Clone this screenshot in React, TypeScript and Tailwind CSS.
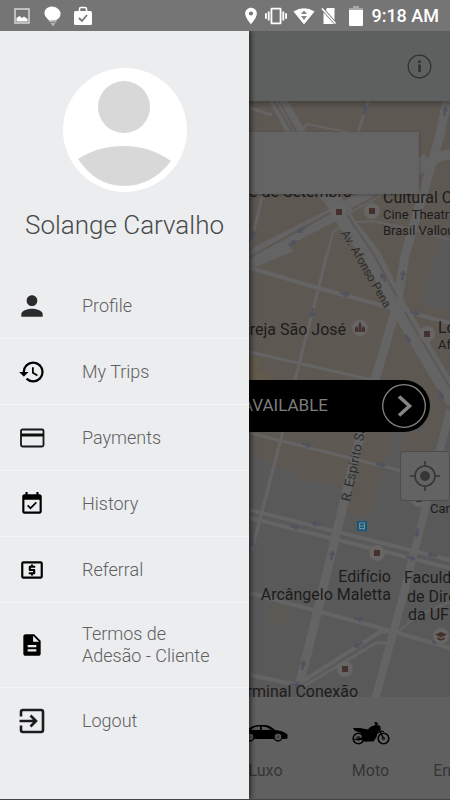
import type { ReactNode } from "react";
import {
  MdDescription,
  MdEventAvailable,
  MdHistory,
  MdLocalAtm,
  MdLocationOn,
  MdPerson,
  MdVibration,
} from "react-icons/md";

type MenuItem = { label: string; icon: ReactNode };

const menu: MenuItem[] = [
  { label: "Profile", icon: <MdPerson className="size-8 text-[#2b2b2b]" /> },
  { label: "My Trips", icon: <MdHistory className="size-7" /> },
  { label: "Payments", icon: <CardIcon /> },
  { label: "History", icon: <MdEventAvailable className="size-[26px]" /> },
  { label: "Referral", icon: <MdLocalAtm className="size-[26px]" /> },
  { label: "Termos de Adesão - Cliente", icon: <MdDescription className="size-[26px]" /> },
  { label: "Logout", icon: <ExitIcon /> },
];

const categories: MenuItem[] = [
  { label: "Luxo", icon: <CarIcon /> },
  { label: "Moto", icon: <MotorcycleIcon /> },
  { label: "Encomenda", icon: null },
];

function CardIcon() {
  return (
    <svg viewBox="0 0 26 20" className="h-5 w-[26px]" aria-hidden="true">
      <rect x="2" y="1.5" width="22.5" height="17" rx="1.5" fill="none" stroke="#161616" strokeWidth="1.8" />
      <path d="M2 7h22.5" stroke="#0a0f0a" strokeWidth="3" />
    </svg>
  );
}

function ExitIcon() {
  return (
    <svg viewBox="0 0 26 26" className="size-[26px]" fill="none" stroke="#1c1c1c" strokeWidth="2.6" aria-hidden="true">
      <path d="M2 8.500V4q0-2 2-2h18q2 0 2 2v18q0 2-2 2H4q-2 0-2-2v-4.500" />
      <path d="M.5 13h15M11.500 7.500 17 13l-5.500 5.500" />
    </svg>
  );
}

function CarIcon() {
  return (
    <svg viewBox="0 0 46 18" className="h-[18px] w-[46px]" aria-hidden="true">
      <path d="M1 8C5 5 9 1 15 1h6c5 0 8 2 11 5 5 .5 9 1.500 11 3.500l1.500 1v4L42 15H2L0 13z" />
      <path d="M8 6c3-3 5-3.500 9-3.500V6zM18.500 2.500c4 0 7 1 9.500 3.500h-9z" fill="#5a5a5a" />
      <circle cx="7" cy="13" r="4" fill="#606060" stroke="#000" strokeWidth="1.5" />
      <circle cx="35" cy="13" r="4" fill="#606060" stroke="#000" strokeWidth="1.5" />
      <path d="M7 9.500v7M3.500 13h7M35 9.500v7M31.500 13h7M32.500 10.500l5 5M37.500 10.500l-5 5" stroke="#333" strokeWidth=".6" />
    </svg>
  );
}

function MotorcycleIcon() {
  return (
    <svg viewBox="0 0 38 24" className="h-6 w-[38px]" aria-hidden="true">
      <g fill="none" stroke="#000">
        <circle cx="6.5" cy="17.5" r="5.3" strokeWidth="1.6" />
        <circle cx="31.5" cy="17.5" r="5.3" strokeWidth="1.6" />
        <circle cx="6.5" cy="17.5" r="1.8" />
        <circle cx="31.5" cy="17.5" r="1.2" />
        <path d="m25 5 6.500 12.500M6.500 17.500 15 20M24 5V1M22.500 1.500 26 3" strokeWidth="1.5" />
        <path d="M24 14q3-5 8-3.500" strokeWidth="1.3" />
      </g>
      <path d="M1 7h7l8 1.500c2-3 5-4 8-4.500l4 .5 1 4-3 1.500-1.500 6-3 4.500H12l-1-2-9 .500 1-1 7-1.500-1.500-5L3 10z" />
    </svg>
  );
}

function NoSimIcon() {
  return (
    <svg viewBox="0 0 16 18" className="h-[18px] w-4" aria-hidden="true">
      <path d="M6 1h7.500v12L4.800 3.200zM2.500 5.500 13 17H2.500z" fill="#fff" />
      <path d="m1 1.500 13.500 15" stroke="#fff" strokeWidth="1.6" />
    </svg>
  );
}

function StatusBar() {
  return (
    <div className="flex h-[31px] items-center justify-between bg-[#757575] pr-[11px] pl-[14px] text-white">
      <div className="flex items-center">
        <svg viewBox="0 0 16 16" className="mr-[13px] size-4" aria-hidden="true">
          <rect x="1" y="1" width="14" height="14" fill="none" stroke="#ddd" strokeWidth="1.4" />
          <path d="M2.500 13.500v-3.500l3-2 2.500 2 2-1.500 3.500 2.500v2.500z" fill="#fff" />
        </svg>
        <svg viewBox="0 0 20 22" className="mr-2.5 h-[22px] w-5" aria-hidden="true">
          <path d="M8 1.500C12 1 17 4 17.500 8c.3 4-2 6-5 7.500l-6 .5C4 13.500 1 11 1.500 7 2 4 4.500 2 8 1.500Z" fill="#fff" />
          <path d="M6 16q4-2 8 0l-4 5.500z" fill="#b5b5b5" />
          <path d="M7 17.500h6" stroke="#757575" strokeWidth=".8" />
        </svg>
        <svg viewBox="0 0 20 20" className="size-5" aria-hidden="true">
          <path d="M6.500 5V3q0-1.500 1.500-1.500h4q1.500 0 1.500 1.500v2" fill="none" stroke="#fff" strokeWidth="1.6" />
          <rect x="1" y="5" width="18" height="14" rx="1.5" fill="#fff" />
          <path d="m6 12 3 3 5-6" fill="none" stroke="#757575" strokeWidth="1.8" />
        </svg>
      </div>
      <div className="flex items-center">
        <MdLocationOn className="mr-1 size-5" aria-hidden="true" />
        <MdVibration className="mr-1.5 size-[22px]" aria-hidden="true" />
        <svg viewBox="0 0 22 18" className="mr-1.5 h-[18px] w-[22px]" aria-hidden="true">
          <path d="M.5 4.500Q11-2 21.500 4.500L11 17.500z" fill="#fff" />
          <path d="m11 3.500 3 3.500H8zM8 9h6l-3 4z" fill="#858585" />
        </svg>
        <NoSimIcon />
        <svg viewBox="0 0 14 20" className="mr-2 ml-3 h-5 w-3.5" aria-hidden="true">
          <path d="M4 0h6v2h3q1 0 1 1v2H0V3q0-1 1-1h3z" fill="#a8a8a8" />
          <path d="M0 4h14v15q0 1-1 1H1q-1 0-1-1z" fill="#fff" />
        </svg>
        <span className="text-lg leading-6 font-medium">9:18 AM</span>
      </div>
    </div>
  );
}

// [points, stroke width]
const streets: [string, number][] = [
  ["250,108 272,115", 3],
  ["300,132 307,124 357,134", 2],
  ["368,101 358,133", 3],
  ["262,197 250,248", 3],
  ["327,255 333,232 345,223 372,221 420,231 450,240", 2],
  ["328,250 318,290 295,380 282,435 252,550", 3],
  ["250,268 318,288 388,307 450,323", 4],
  ["250,352 372,380", 3],
  ["250,433 398,470 450,485", 3],
  ["250,510 450,560", 4],
  ["250,518 450,568", 4],
  ["250,593 388,630 450,648", 4],
  ["250,675 298,685", 4],
  ["300,683 380,632 392,631", 4],
  ["304,686 376,643 386,643", 3],
  ["398,632 418,615 450,602", 2],
  ["451,80 440,135 427,180 405,255 397,305 375,380 361,432 313,630 300,682", 9],
  ["450,410 445,430 402,600 375,700", 8],
  ["418,170 440,156 455,154", 10],
  ["240,266 290,245", 14],
  ["240,262 339,212 378,190 428,160", 14],
  ["268,90 290,132 323,195 348,225", 8],
  ["280,95 302,132 339,200", 7],
  ["330,195 348,225 372,255 397,305 418,340 455,402", 17],
];

// [x, y, heading in degrees]
const oneWays: [number, number, number][] = [
  [365, 110, -78], [445, 111, -78], [301, 230, 148], [293, 243, -28], [253, 235, -78],
  [383, 277, -120], [403, 275, -78], [345, 294, 13], [312, 313, 103], [415, 313, 13],
  [408, 339, 60], [441, 395, 60], [307, 445, 13], [381, 465, 13], [316, 524, 193],
  [295, 527, 13], [252, 543, 105], [332, 555, -78], [417, 533, 103], [432, 555, 193],
  [411, 558, 13], [359, 619, 13], [303, 665, -78], [358, 645, 150], [296, 685, 13], [436, 642, 193],
];

const places: [number, number][] = [
  [339, 212], [372, 211], [427, 334], [419, 499], [377, 553], [345, 669],
];

function CityMap() {
  return (
    <svg
      viewBox="0 101 450 596"
      preserveAspectRatio="xMidYMid slice"
      className="absolute inset-0 size-full"
      role="img"
      aria-label="Map"
    >
      <rect y="101" width="450" height="596" fill="#5e5853" />
      <g fill="#595959">
        <path d="M437 250 425 290 424 305 450 313V250zM440 232 450 236V250H436z" />
        <path d="M0 455H250L298 473 300 481 324 482 342 487 355 512 368 517 380 483 385 460 400 410 430 430 450 440V697H0z" />
      </g>
      <path d="M342 487 362 440H392L378 483 368 518 346 512z" fill="#5e5853" />
      <path d="M405 430H438L432 456 400 448z" fill="#5e5853" />
      <path d="M250 356 260 357 258 372 270 375 265 392H250z" fill="#625b4c" />
      <path d="M272 600 290 605 285 627 266 620z" fill="#5b5954" />
      <g fill="none" stroke="#656464" strokeLinejoin="round">
        {streets.map(([points, width]) => (
          <polyline key={points} points={points} strokeWidth={width} />
        ))}
      </g>
      <g fill="none" stroke="#5c5854" strokeWidth="2">
        <path d="M250 257 330 213M352 209 378 195" />
        <path d="M274 101 294 135" />
        <path d="m347 215 27 40 23 42M405 312 450 388" />
      </g>
      <g fill="none" stroke="#52535f" strokeWidth="2.5">
        {oneWays.map(([x, y, angle]) => (
          <g key={`${x}-${y}`} transform={`translate(${x} ${y}) rotate(${angle})`}>
            <path d="M-5 0H2" />
            <path d="M0-3.500 5 0 0 3.500z" fill="#52535f" stroke="none" />
          </g>
        ))}
      </g>
      {places.map(([x, y]) => (
        <g key={`${x}-${y}`}>
          <circle cx={x} cy={y} r="8" fill="#676665" />
          <rect x={x - 3} y={y - 3} width="6" height="6" fill="#44302d" />
        </g>
      ))}
      <circle cx="360" cy="328" r="8" fill="#676665" />
      <path d="M355 332v-4l1.500-2 1.500 2v4zM358.500 332v-7l1.500-3 1.500 3v7zM362 332v-4l1.500-2 1.500 2v4z" fill="#44302d" />
      <circle cx="441" cy="636" r="8" fill="#676665" />
      <path d="m435 634.500 6-2.500 6 2.500-6 3zM437.500 637v2.500q3.500 2 7 0V637l-3.500 2z" fill="#44302d" />
      <rect x="357" y="521" width="10" height="10" fill="#125a7c" />
      <path d="M359.500 523h5v5.500h-5zM359.500 526h5M360 530v-1M364 530v-1" fill="none" stroke="#7a8c94" />

      <g fill="#1d1c1b" fontSize="16">
        <text x="352" y="197" textAnchor="end">Sete de Setembro</text>
        <text x="383" y="203">Cultural C</text>
        <text x="346" y="335" textAnchor="end">Igreja São José</text>
        <text x="438" y="333">Lo</text>
        <text x="391" y="582" textAnchor="end">Edifício</text>
        <text x="391" y="600" textAnchor="end">Arcângelo Maletta</text>
        <text x="404" y="583">Faculd</text>
        <text x="407" y="602">de Dire</text>
        <text x="408" y="620">da UF</text>
        <text x="358" y="697" textAnchor="end">Terminal Conexão</text>
      </g>
      <g fill="#1d1c1b" fontSize="13">
        <text x="383" y="219">Cine Theatr</text>
        <text x="383" y="235">Brasil Vallou</text>
        <text x="438" y="349">Af</text>
        <text x="430" y="513">Car</text>
      </g>
      <g fill="#2c2c2c">
        <text fontSize="12" transform="translate(341 233) rotate(60)">Av. Afonso Pena</text>
        <text fontSize="13" transform="translate(350 502) rotate(-78)">R. Espírito Santo</text>
      </g>
    </svg>
  );
}

function Drawer() {
  return (
    <aside className="absolute inset-y-0 left-0 w-[249px] bg-[#ebedef] shadow-[2px_0_5px_rgba(0,0,0,0.6)]">
      <div className="flex h-[242px] flex-col items-center pt-[37px]">
        <svg viewBox="0 0 124 124" className="size-[124px]" role="img" aria-label="Profile photo">
          <circle cx="62" cy="62" r="62" fill="#fff" />
          <circle cx="61" cy="39" r="26" fill="#d8d8d8" />
          <path d="M15 91Q35 78 61 78T108 93Q89 118 61 118T15 91Z" fill="#d8d8d8" />
        </svg>
        <h1 className="mt-[17px] text-[26px] leading-8 font-light text-[#4a4a4a]">Solange Carvalho</h1>
      </div>
      <nav>
        <ul className="divide-y divide-[#f3f5f6]">
          {menu.map((item) => (
            <li key={item.label}>
              <a
                href="#"
                className="flex min-h-[65px] items-center gap-[18px] pr-5 text-lg leading-[22px] font-light text-[#606060]"
              >
                <span className="flex w-16 shrink-0 justify-center text-black">{item.icon}</span>
                <span className="py-5">{item.label}</span>
              </a>
            </li>
          ))}
        </ul>
      </nav>
    </aside>
  );
}

export default function App() {
  return (
    <div className="flex min-h-screen flex-col font-[Roboto,sans-serif]">
      <StatusBar />
      <div className="relative flex flex-1 flex-col overflow-hidden border-b border-[#444] bg-[#606060]">
        <header className="flex h-[70px] items-center justify-end bg-[#5d605f] pr-[18px]">
          <button type="button" aria-label="Information">
            <svg viewBox="0 0 25 25" className="size-[25px]" fill="none" stroke="#303131" aria-hidden="true">
              <circle cx="12.5" cy="12.5" r="11.3" strokeWidth="1.2" />
              <path d="M12.500 10.500V18M12.500 6.500V9" strokeWidth="2.6" />
            </svg>
          </button>
        </header>

        <main className="relative flex min-h-[596px] flex-1 flex-col overflow-hidden pt-[31px]">
          <CityMap />
          <div className="absolute inset-x-0 top-0 h-2 bg-linear-to-b from-black/25 to-transparent" />
          <div className="relative mr-[31px] h-[62px] bg-[#646464] shadow-[0_1px_3px_rgba(0,0,0,0.25)]" />
          <button
            type="button"
            className="relative mx-5 mt-[186px] flex h-[52px] items-center justify-end gap-[54px] rounded-full bg-black pr-1 text-[17px] text-[#7d7d7d]"
          >
            AVAILABLE
            <svg viewBox="0 0 44 44" className="size-11" fill="none" stroke="#858585" aria-hidden="true">
              <circle cx="22" cy="22" r="21.3" strokeWidth="1.3" />
              <path d="m17 12.500 10.500 9.500L17 31.500" strokeWidth="3.6" />
            </svg>
          </button>
          <button
            type="button"
            aria-label="My location"
            className="relative mt-[19px] flex size-[50px] items-center justify-center self-end rounded-sm border border-[#4c4c4c] bg-[#636363]"
          >
            <svg viewBox="0 0 30 30" className="size-[30px]" fill="none" stroke="#363636" strokeWidth="1.6" aria-hidden="true">
              <circle cx="15" cy="15" r="10" />
              <circle cx="15" cy="15" r="5" fill="#363636" stroke="none" />
              <path d="M15 0v5M15 25v5M0 15h5M25 15h5" />
            </svg>
          </button>
        </main>

        <div className="flex h-[102px] overflow-hidden pt-6 pl-[213px] shadow-[0_-1px_4px_rgba(0,0,0,0.3)]">
          {categories.map((category) => (
            <button
              key={category.label}
              type="button"
              className="flex w-[105px] shrink-0 flex-col items-center gap-[14px] text-[#353535]"
            >
              <span className="flex h-6 items-center text-black">{category.icon}</span>
              {category.label}
            </button>
          ))}
        </div>

        <Drawer />
      </div>
    </div>
  );
}
